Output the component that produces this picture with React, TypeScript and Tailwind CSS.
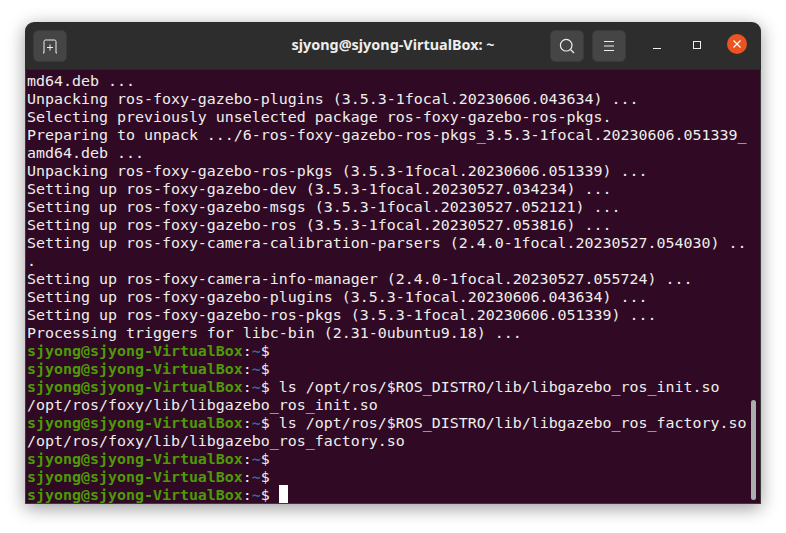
const LINES: (string | { cmd: string })[] = [
  "md64.deb ...",
  "Unpacking ros-foxy-gazebo-plugins (3.5.3-1focal.20230606.043634) ...",
  "Selecting previously unselected package ros-foxy-gazebo-ros-pkgs.",
  "Preparing to unpack .../6-ros-foxy-gazebo-ros-pkgs_3.5.3-1focal.20230606.051339_",
  "amd64.deb ...",
  "Unpacking ros-foxy-gazebo-ros-pkgs (3.5.3-1focal.20230606.051339) ...",
  "Setting up ros-foxy-gazebo-dev (3.5.3-1focal.20230527.034234) ...",
  "Setting up ros-foxy-gazebo-msgs (3.5.3-1focal.20230527.052121) ...",
  "Setting up ros-foxy-gazebo-ros (3.5.3-1focal.20230527.053816) ...",
  "Setting up ros-foxy-camera-calibration-parsers (2.4.0-1focal.20230527.054030) ..",
  ".",
  "Setting up ros-foxy-camera-info-manager (2.4.0-1focal.20230527.055724) ...",
  "Setting up ros-foxy-gazebo-plugins (3.5.3-1focal.20230606.043634) ...",
  "Setting up ros-foxy-gazebo-ros-pkgs (3.5.3-1focal.20230606.051339) ...",
  "Processing triggers for libc-bin (2.31-0ubuntu9.18) ...",
  { cmd: "" },
  { cmd: "" },
  { cmd: " ls /opt/ros/$ROS_DISTRO/lib/libgazebo_ros_init.so" },
  "/opt/ros/foxy/lib/libgazebo_ros_init.so",
  { cmd: " ls /opt/ros/$ROS_DISTRO/lib/libgazebo_ros_factory.so" },
  "/opt/ros/foxy/lib/libgazebo_ros_factory.so",
  { cmd: "" },
  { cmd: "" },
];

function Prompt() {
  return (
    <>
      <span className="font-bold text-[#4e9a06]">sjyong@sjyong-VirtualBox</span>
      <span>:</span>
      <span className="font-bold text-[#3465a4]">~</span>
      <span>$</span>
    </>
  );
}

function HeaderButton({ children }: { children: React.ReactNode }) {
  return (
    <div className="w-[34px] h-[32px] rounded-[5px] bg-[#454545] border border-[#3a3a3a] flex items-center justify-center">
      {children}
    </div>
  );
}

export default function App() {
  return (
    <div className="w-[786px] h-[533px] bg-white pl-[25px] pt-[22px] overflow-hidden">
      <div className="relative w-[736px] h-[482px] rounded-t-[9px] overflow-hidden flex flex-col shadow-[0_4px_18px_rgba(0,0,0,0.4)]">

        {/* Title bar */}
        <div className="h-[48px] shrink-0 bg-[#2d2d2d] grid grid-cols-[1fr_auto_1fr] items-center pl-[8px] pr-[14px] border-b border-[#262626]">
          <div>
            <HeaderButton>
              <svg width="16" height="16" viewBox="0 0 16 16" fill="none" stroke="#eeeeec" strokeWidth="1">
                <path d="M1 15h1V3.500A1.500 1.500 0 0 1 3.500 2h9A1.500 1.500 0 0 1 14 3.500V15h1" />
                <path d="M8 6.500v6M5 9.500h6" />
              </svg>
            </HeaderButton>
          </div>
          <div className="relative left-[3px] -top-[1px] text-center text-[#eeeeec] text-[14.400px] font-bold font-['Noto_Sans',sans-serif]">
            sjyong@sjyong-VirtualBox: ~
          </div>
          <div className="flex items-center justify-end">
            <div className="flex items-center gap-[8px]">
              <HeaderButton>
                <svg width="16" height="16" viewBox="0 0 16 16" fill="none" stroke="#eeeeec" strokeWidth="1.200">
                  <circle cx="7.200" cy="7.200" r="5.800" />
                  <path d="M11.500 11.500L15 15" />
                </svg>
              </HeaderButton>
              <HeaderButton>
                <svg width="12" height="12" viewBox="0 0 12 12" fill="none" stroke="#eeeeec" strokeWidth="1">
                  <path d="M1 1.500h10M1 6h10M1 10.500h10" />
                </svg>
              </HeaderButton>
            </div>
            <svg className="ml-[27px] mt-[4px]" width="8" height="8" viewBox="0 0 8 8" fill="none" stroke="#eeeeec" strokeWidth="1">
              <path d="M0 4.500h8" />
            </svg>
            <svg className="ml-[32px] mt-[-2px]" width="8" height="8" viewBox="0 0 8 8" fill="none" stroke="#eeeeec" strokeWidth="1">
              <rect x="0.500" y="0.500" width="7" height="7" />
            </svg>
            <div className="ml-[26px] mt-[-4px] w-[20px] h-[20px] rounded-full bg-[#e95420] flex items-center justify-center">
              <svg width="8" height="8" viewBox="0 0 8 8" fill="none" stroke="#ffffff" strokeWidth="1.200">
                <path d="M0.500 0.500l7 7M7.500 0.500l-7 7" />
              </svg>
            </div>
          </div>
        </div>

        {/* Terminal */}
        <div className="flex-1 bg-[#300a24] pl-[1px] pt-[1px] text-[#eeeeec] text-[14.950px] leading-[20px] font-['DejaVu_Sans_Mono',monospace] border-b border-x border-[#3a3a3a]">
          {LINES.map((line, i) => (
            <div key={i} className="h-[18px] whitespace-pre">
              {typeof line === "string" ? line : (<><Prompt />{line.cmd}</>)}
            </div>
          ))}
          <div className="h-[18px] whitespace-pre flex items-start">
            <span><Prompt /> </span>
            <span className="inline-block w-[9px] h-[18px] bg-white" />
          </div>
        </div>

        {/* Overlay scrollbar */}
        <div className="absolute left-[726px] top-[378px] w-[5px] h-[100px] rounded-full bg-[#adadad]" />
      </div>
    </div>
  );
}
